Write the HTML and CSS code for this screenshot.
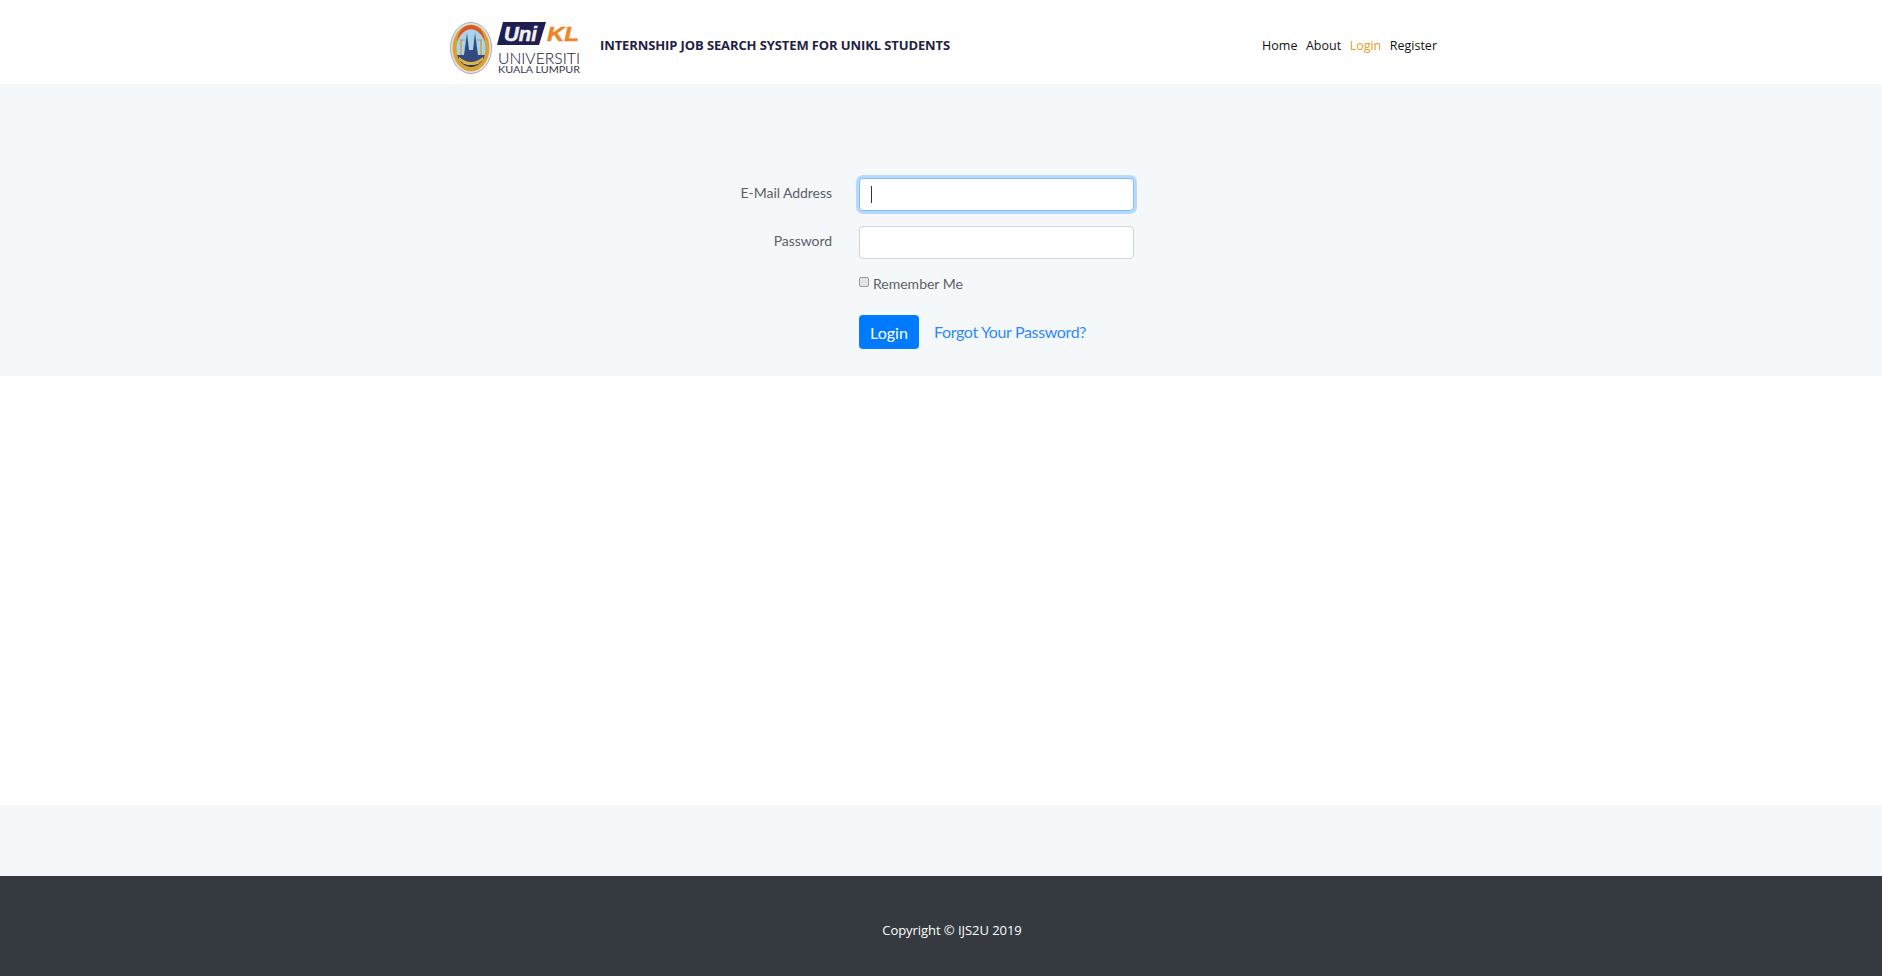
FILE: index.html
```html
<!DOCTYPE html>
<html lang="en">
<head>
<meta charset="utf-8">
<title>Login</title>
<link rel="stylesheet" href="styles.css">
</head>
<body>
<header class="topbar">
  <div class="topbar-inner">
    <a class="brand" href="#">
      <svg class="logo" width="131" height="58" viewBox="0 0 131 58" aria-label="UniKL Universiti Kuala Lumpur">
        <defs>
          <clipPath id="seal"><ellipse cx="21" cy="29" rx="15" ry="19"/></clipPath>
        </defs>
        <ellipse cx="21" cy="29" rx="20.5" ry="25.5" fill="#e4e4e6" stroke="#a9a9b4" stroke-width="1"/>
        <ellipse cx="21" cy="29" rx="18.5" ry="23.5" fill="#d9a233"/>
        <path d="M7 22 Q9 7 21 6 Q33 7 35 22 L31 20 Q29 10 21 10 Q13 10 11 20Z" fill="#d8542b"/>
        <ellipse cx="21" cy="29" rx="14.5" ry="18.5" fill="#a9d3ea"/>
        <g clip-path="url(#seal)">
          <path d="M6 44 V36 H14 L17 14 L19 31 H23 L25 14 L28 36 H36 V44Z" fill="#34497f"/>
          <path d="M5 40 Q21 52 37 40 V52 H5Z" fill="#26305f"/>
          <path d="M9 38 Q21 48 33 38 L33 41 Q21 51 9 41Z" fill="#e2b63e"/>
          <path d="M10 21 H15 M27 21 H32 M11 21 V36 M31 21 V36" stroke="#c59a2a" stroke-width="1.2" fill="none"/>
        </g>
        <path d="M53 3 H96 L89 26 H47Z" fill="#1e1e50"/>
        <text class="logo-uni" x="54" y="21.5" textLength="33" lengthAdjust="spacingAndGlyphs">Uni</text>
        <text class="logo-kl" x="97" y="21.5" textLength="32" lengthAdjust="spacingAndGlyphs">KL</text>
        <text class="logo-univ" x="48" y="45" textLength="82" lengthAdjust="spacingAndGlyphs">UNIVERSITI</text>
        <text class="logo-kuala" x="48" y="54" textLength="82" lengthAdjust="spacingAndGlyphs">KUALA LUMPUR</text>
      </svg>
      <span class="brand-title">INTERNSHIP JOB SEARCH SYSTEM FOR UNIKL STUDENTS</span>
    </a>
    <nav class="nav">
      <a href="#">Home</a>
      <a href="#">About</a>
      <a class="active" href="#">Login</a>
      <a href="#">Register</a>
    </nav>
  </div>
</header>
<main class="band">
  <form class="login">
    <div class="row">
      <label class="label" for="email">E-Mail Address</label>
      <div class="field focused" id="email"><span class="caret"></span></div>
    </div>
    <div class="row">
      <label class="label" for="password">Password</label>
      <input class="field" id="password" type="password">
    </div>
    <div class="row remember-row">
      <span class="label"></span>
      <label class="remember"><span class="box"></span>Remember Me</label>
    </div>
    <div class="row actions">
      <span class="label"></span>
      <button class="btn" type="button">Login</button>
      <a class="forgot" href="#">Forgot Your Password?</a>
    </div>
  </form>
</main>
<div class="blank"></div>
<div class="spacer"></div>
<footer class="footer">Copyright © IJS2U 2019</footer>
</body>
</html>
```
FILE: styles.css
```css
* { box-sizing: border-box; }
html, body { margin: 0; padding: 0; }
body { background: #fff; font-family: "Open Sans", "Noto Sans", sans-serif; display: flex; flex-direction: column; height: 976px; overflow: hidden; }
a { text-decoration: none; }

.topbar { height: 84px; background: #fff; flex: none; }
.topbar-inner { width: 987px; margin-left: 450px; display: flex; align-items: flex-start; justify-content: space-between; }
.brand { display: flex; align-items: flex-start; padding-top: 19px; }
.logo { flex: none; margin-right: 19px; display: block; }
.brand-title { font-size: 13px; font-weight: 700; color: #1f2245; line-height: 18px; margin-top: 17px; letter-spacing: -0.11px; }
.logo-uni { font: italic 700 21px "Liberation Sans", sans-serif; fill: #f1f1f4; stroke: #f1f1f4; stroke-width: 0.5; }
.logo-kl { font: italic 700 21px "Liberation Sans", sans-serif; fill: #f08425; stroke: #f08425; stroke-width: 0.5; }
.logo-univ { font: 300 15.5px "Lato", sans-serif; fill: #2a2a44; stroke: #2a2a44; stroke-width: 0.1; }
.logo-kuala { font: 400 9.5px "Lato", sans-serif; fill: #34344e; }

.nav { display: flex; gap: 8.5px; padding-top: 37px; font-size: 12.5px; line-height: 18px; }
.nav a { color: #111; }
.nav a.active { color: #e0a020; }

.band { background: #f5f8fb; height: 292px; flex: none; padding-top: 94px; }
.login { width: 1140px; margin: 0 auto; font-family: "Lato", sans-serif; }
.row { display: flex; align-items: flex-start; }
.label { width: 461px; text-align: right; font-size: 14px; color: #5a6068; line-height: 20px; flex: none; padding-top: 5px; letter-spacing: -0.05px; }
.field { width: 275px; height: 33px; margin-left: 27px; background: #fff; border: 1px solid #ced4da; border-radius: 4px; display: block; padding: 0; margin-bottom: 15px; }
.field.focused { border-color: #80bdff; box-shadow: 0 0 0 3px rgba(0,123,255,.25); display: flex; align-items: center; padding-left: 11px; }
.caret { width: 1px; height: 17px; background: #333; }
.remember-row { height: 41px; }
.remember { margin-left: 27px; font-size: 14px; color: #5a6068; line-height: 20px; display: flex; align-items: flex-start; }
.box { width: 10px; height: 10px; margin: 3px 4px 0 0; background: #e4e4e4; border: 1px solid #999; border-radius: 2px; display: block; }
.btn { margin-left: 27px; width: 60px; height: 34px; background: #007bff; color: #fff; border: 0; border-radius: 4px; font: 16px "Lato", sans-serif; padding: 0; }
.forgot { margin-left: 15px; color: #2f88ff; font-size: 16px; line-height: 34px; letter-spacing: -0.35px; }

.blank { height: 429px; background: #fff; flex: none; }
.spacer { height: 71px; background: #f5f8fb; flex: none; }
.footer { flex: 1; background: #343a40; color: #fff; font-size: 13px; padding: 45px 0 0 22px; text-align: center; line-height: 18px; letter-spacing: -0.05px; }
```
